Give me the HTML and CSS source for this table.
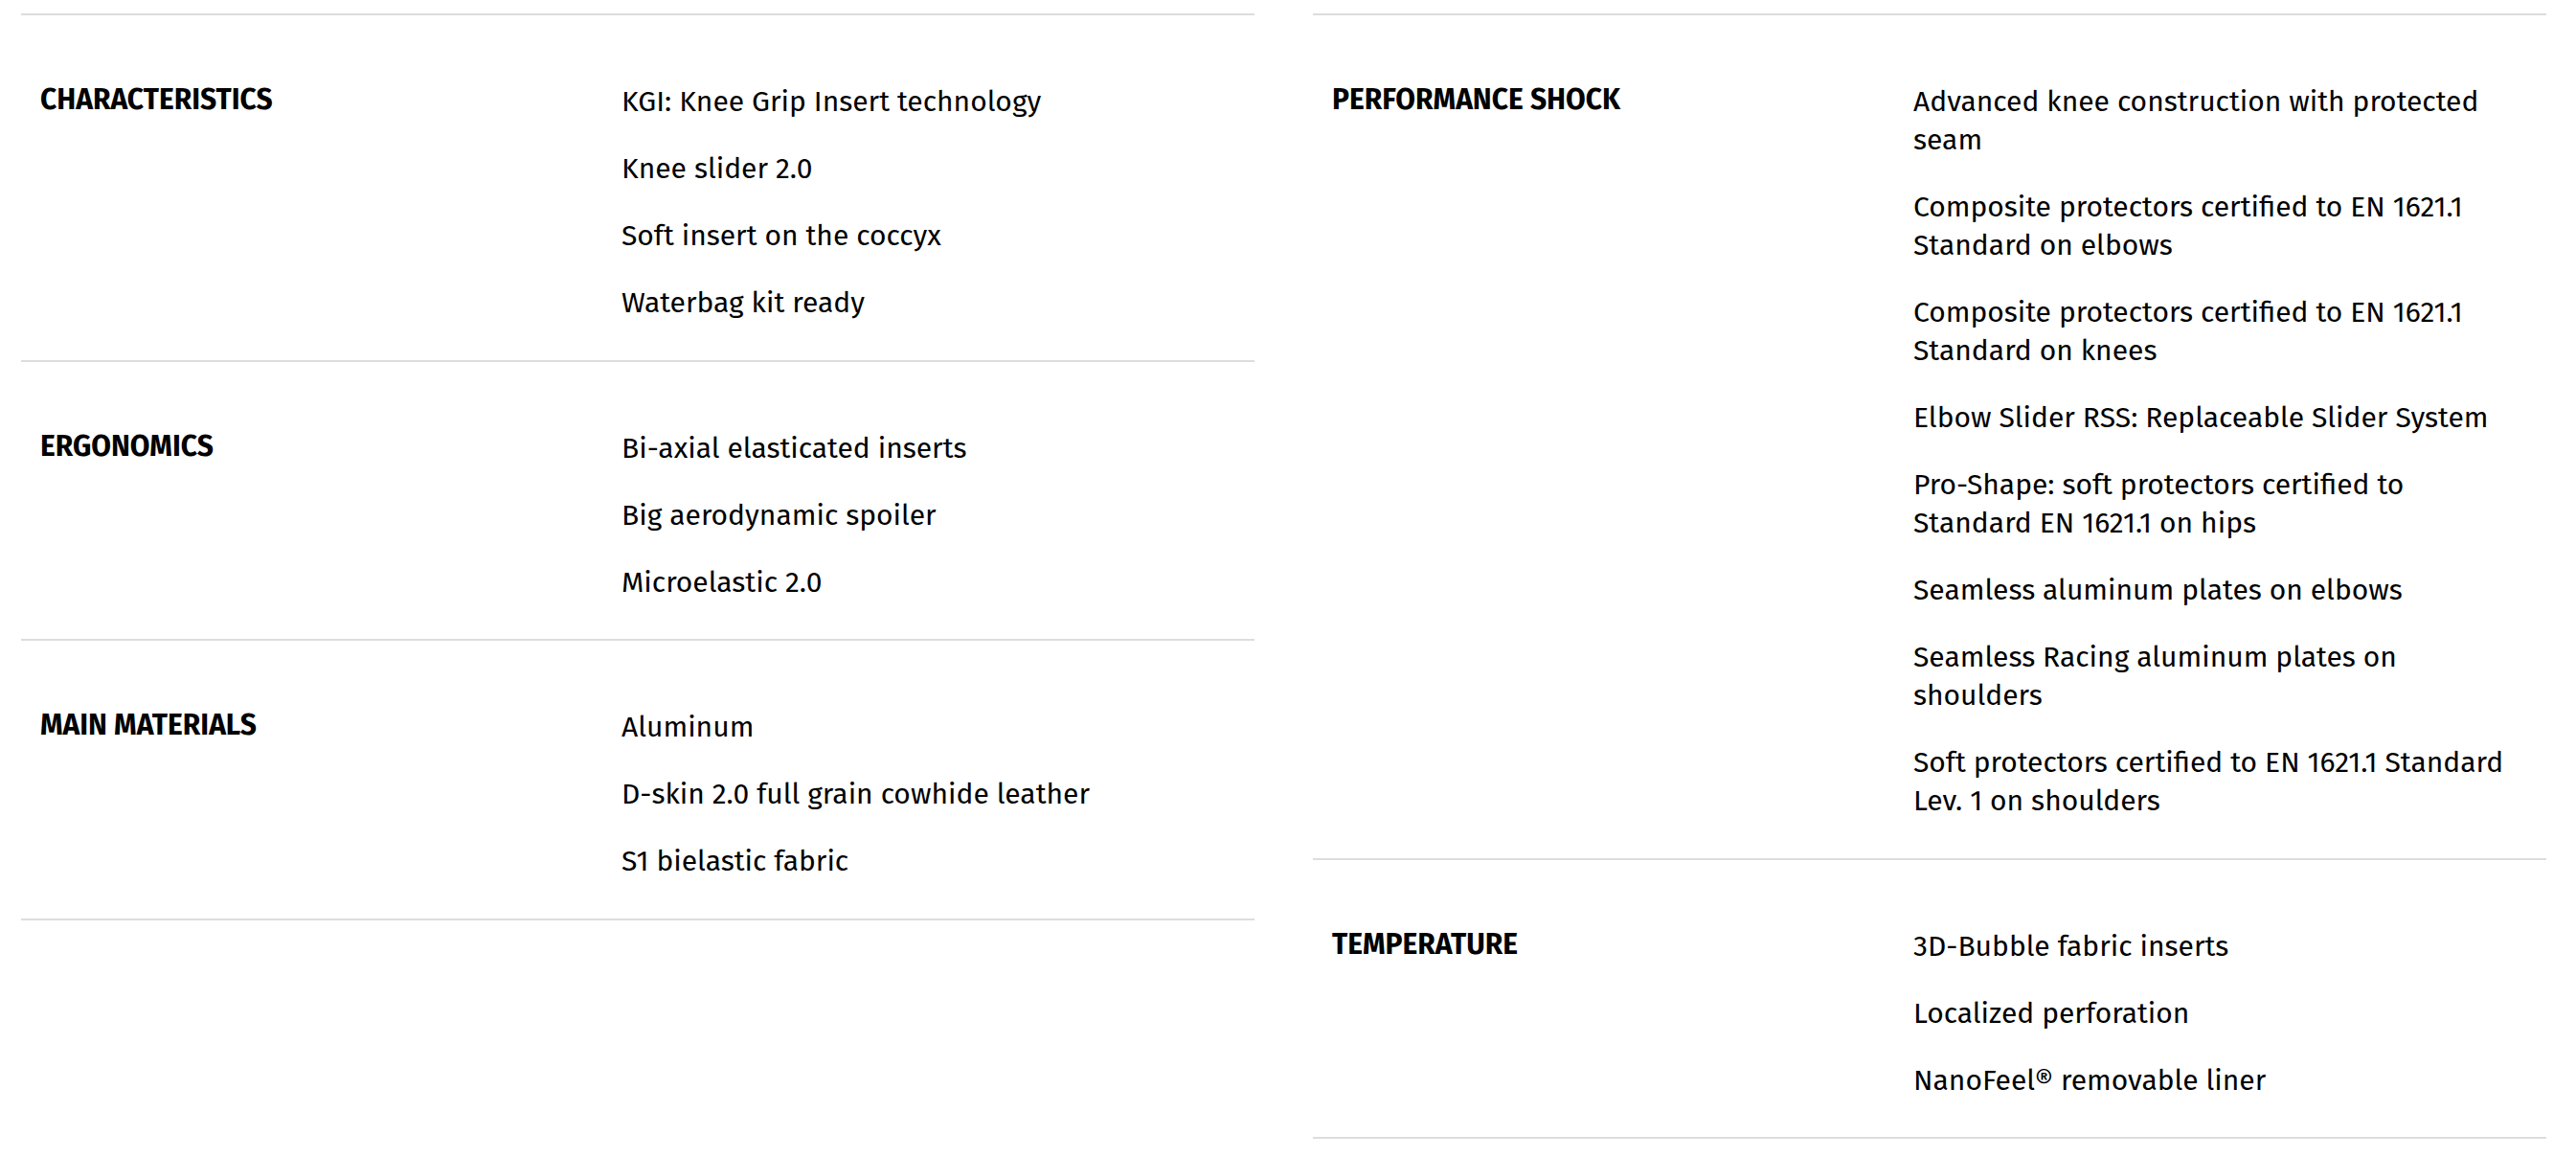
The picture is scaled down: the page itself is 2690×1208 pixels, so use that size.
FILE: index.html
```html
<!DOCTYPE html>
<html lang="en">
<head>
<meta charset="utf-8">
<title>Specifications</title>
<link rel="stylesheet" href="styles.css">
</head>
<body>
<main class="specs">
  <section class="spec-col">
    <div class="spec-row">
      <h3 class="spec-label">CHARACTERISTICS</h3>
      <ul class="spec-values">
        <li>KGI: Knee Grip Insert technology</li>
        <li>Knee slider 2.0</li>
        <li>Soft insert on the coccyx</li>
        <li>Waterbag kit ready</li>
      </ul>
    </div>
    <div class="spec-row">
      <h3 class="spec-label">ERGONOMICS</h3>
      <ul class="spec-values">
        <li>Bi-axial elasticated inserts</li>
        <li>Big aerodynamic spoiler</li>
        <li>Microelastic 2.0</li>
      </ul>
    </div>
    <div class="spec-row">
      <h3 class="spec-label">MAIN MATERIALS</h3>
      <ul class="spec-values">
        <li>Aluminum</li>
        <li>D-skin 2.0 full grain cowhide leather</li>
        <li>S1 bielastic fabric</li>
      </ul>
    </div>
  </section>
  <section class="spec-col">
    <div class="spec-row">
      <h3 class="spec-label">PERFORMANCE SHOCK</h3>
      <ul class="spec-values">
        <li>Advanced knee construction with protected seam</li>
        <li>Composite protectors certified to EN 1621.1 Standard on elbows</li>
        <li>Composite protectors certified to EN 1621.1 Standard on knees</li>
        <li>Elbow Slider RSS: Replaceable Slider System</li>
        <li>Pro-Shape: soft protectors certified to Standard EN 1621.1 on hips</li>
        <li>Seamless aluminum plates on elbows</li>
        <li>Seamless Racing aluminum plates on shoulders</li>
        <li>Soft protectors certified to EN 1621.1 Standard Lev. 1 on shoulders</li>
      </ul>
    </div>
    <div class="spec-row">
      <h3 class="spec-label">TEMPERATURE</h3>
      <ul class="spec-values">
        <li>3D-Bubble fabric inserts</li>
        <li>Localized perforation</li>
        <li>NanoFeel® removable liner</li>
      </ul>
    </div>
  </section>
</main>
</body>
</html>
```
FILE: styles.css
```css
html, body {
  margin: 0;
  padding: 0;
  background: #fff;
}

body {
  font-family: "Fira Sans", "Open Sans", sans-serif;
  color: #000;
}

.specs {
  display: grid;
  grid-template-columns: 1288px 1288px;
  column-gap: 61px;
  padding: 14px 31px 0 22px;
  align-items: start;
}

.spec-col {
  border-top: 2px solid #dddddd;
}

.spec-row {
  display: grid;
  grid-template-columns: 607px 1fr;
  padding: 70px 38px 39.5px 20px;
  border-bottom: 2px solid #dddddd;
}

.spec-label {
  margin: 0;
  font-size: 30px;
  font-weight: 700;
  line-height: 37px;
  letter-spacing: 0;
}

.spec-values {
  list-style: none;
  margin: 0;
  padding: 0;
  display: flex;
  flex-direction: column;
  gap: 30px;
  font-size: 30px;
  font-weight: 400;
  line-height: 40px;
}
```
